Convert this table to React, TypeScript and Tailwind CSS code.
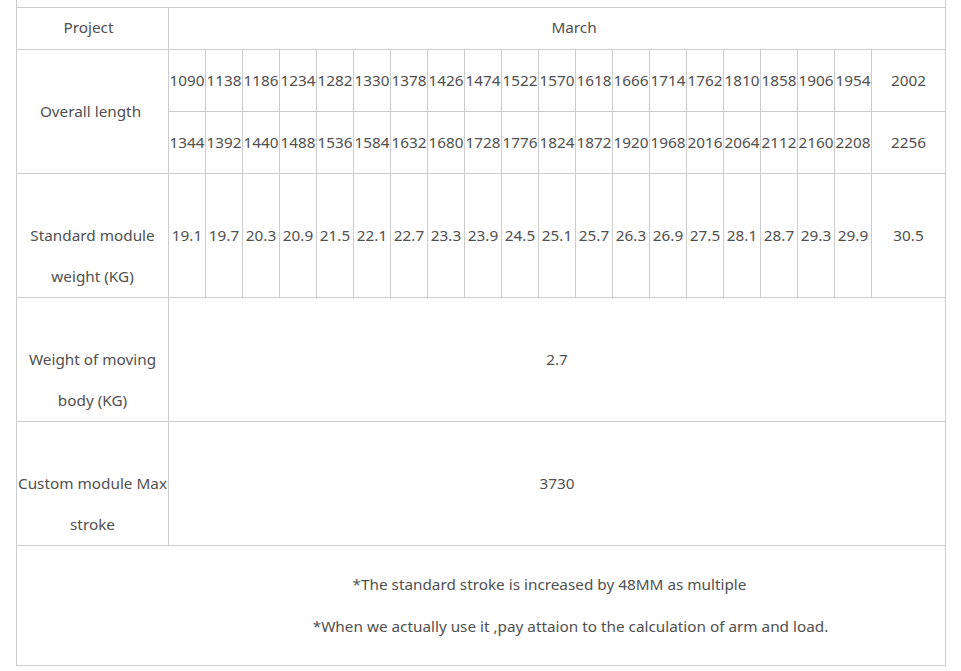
const lengthsA = [1090, 1138, 1186, 1234, 1282, 1330, 1378, 1426, 1474, 1522, 1570, 1618, 1666, 1714, 1762, 1810, 1858, 1906, 1954, 2002];
const lengthsB = [1344, 1392, 1440, 1488, 1536, 1584, 1632, 1680, 1728, 1776, 1824, 1872, 1920, 1968, 2016, 2064, 2112, 2160, 2208, 2256];
const weights = ['19.1', '19.7', '20.3', '20.9', '21.5', '22.1', '22.7', '23.3', '23.9', '24.5', '25.1', '25.7', '26.3', '26.9', '27.5', '28.1', '28.7', '29.3', '29.9', '30.5'];

const cell = 'border border-[#cccccc] p-0 text-center align-middle whitespace-nowrap';

const App = () => {
  return (
    <div className="w-[961px] h-[671px] overflow-hidden bg-white pl-[16px] text-[15.3px] text-[#505050]" style={{ fontFamily: '"Noto Sans", "Open Sans", sans-serif' }}>
      <table className="w-[930px] table-fixed border-collapse">
        <colgroup>
          <col className="w-[152px]" />
          {lengthsA.slice(0, 19).map((n) => (
            <col key={n} className="w-[37px]" />
          ))}
          <col className="w-[74px]" />
        </colgroup>
        <tbody>
          <tr className="h-[7px]">
            <td colSpan={21} className="border border-t-0 border-[#cccccc] p-0"></td>
          </tr>
          <tr className="h-[42px]">
            <td className={`${cell} pb-[2px] pr-[8px]`}>Project</td>
            <td colSpan={20} className={`${cell} pb-[2px] pl-[34px]`}>March</td>
          </tr>
          <tr className="h-[62px]">
            <td rowSpan={2} className={`${cell} pr-[4px]`}>Overall length</td>
            {lengthsA.map((n) => (
              <td key={n} className={cell}>{n}</td>
            ))}
          </tr>
          <tr className="h-[62px]">
            {lengthsB.map((n) => (
              <td key={n} className={cell}>{n}</td>
            ))}
          </tr>
          <tr className="h-[124px]">
            <td className={`${cell} !align-bottom leading-[41px]`}>
              Standard module
              <br />
              weight (KG)
            </td>
            {weights.map((w) => (
              <td key={w} className={cell}>{w}</td>
            ))}
          </tr>
          <tr className="h-[124px]">
            <td className={`${cell} !align-bottom leading-[41px]`}>
              Weight of moving
              <br />
              body (KG)
            </td>
            <td colSpan={20} className={cell}>2.7</td>
          </tr>
          <tr className="h-[124px]">
            <td className={`${cell} !align-bottom leading-[41px]`}>
              Custom module Max
              <br />
              stroke
            </td>
            <td colSpan={20} className={cell}>3730</td>
          </tr>
          <tr className="h-[120px]">
            <td colSpan={21} className={`${cell} leading-[42px]`}>
              <p className="pl-[137px]">*The standard stroke is increased by 48MM as multiple</p>
              <p className="pl-[179px]">*When we actually use it ,pay attaion to the calculation of arm and load.</p>
            </td>
          </tr>
        </tbody>
      </table>
    </div>
  );
};

export default App;
